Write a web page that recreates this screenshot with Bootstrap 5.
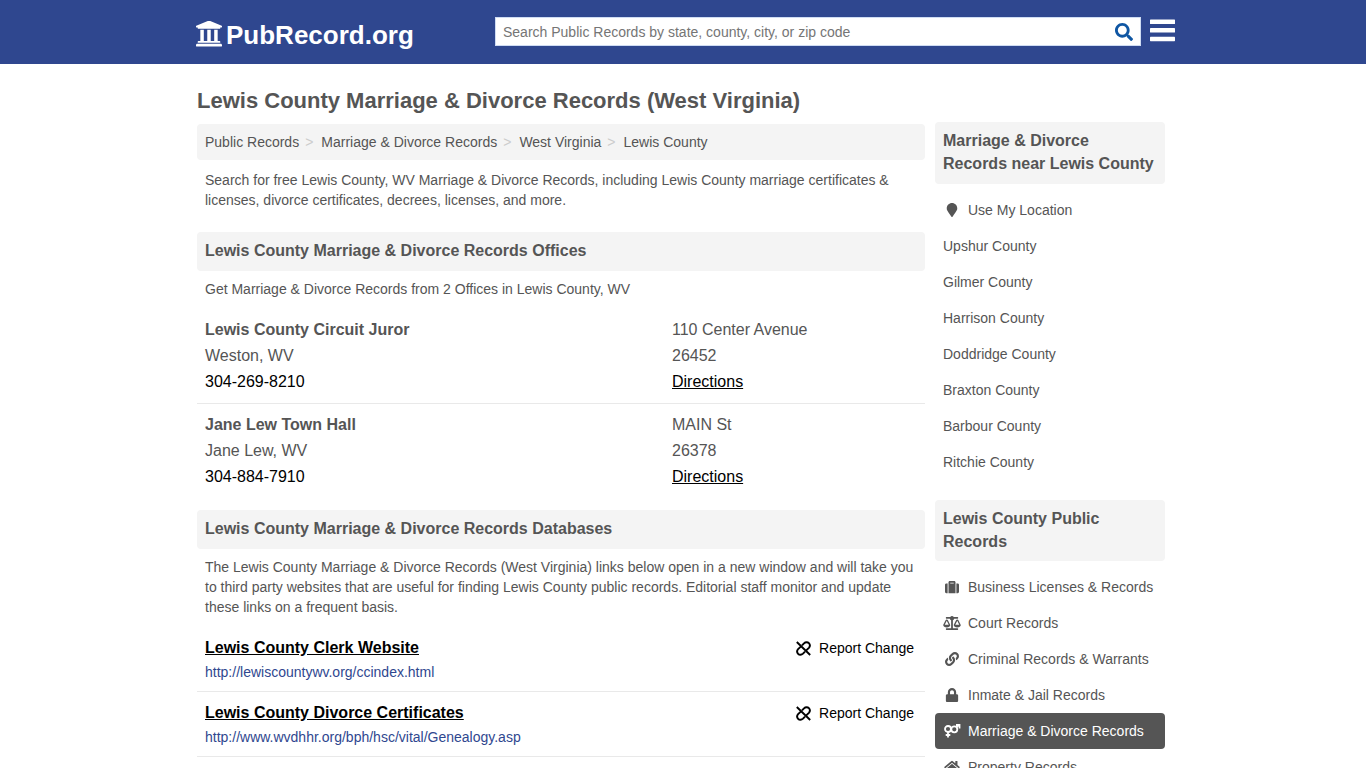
<!DOCTYPE html>
<html lang="en">
<head>
<meta charset="utf-8">
<meta name="viewport" content="width=device-width, initial-scale=1">
<title>Lewis County Marriage &amp; Divorce Records (West Virginia)</title>
<link href="https://cdn.jsdelivr.net/npm/bootstrap@5.3.0/dist/css/bootstrap.min.css" rel="stylesheet">
<style>
body { font-family: "Liberation Sans", Arial, sans-serif; font-size: 14px; line-height: 20px; color: #555; }
.site-header { background: #2f478f; min-height: 64px; }
.header-wrap { max-width: 984px; margin: 0 auto; padding-left: 5px; }
.page-wrap { max-width: 980px; margin: 0 auto; padding: 0 8px 0 4px; gap: 10px; }
.brand { color: #fff; font-size: 26px; line-height: 32px; font-weight: 700; text-decoration: none; padding-top: 3px; gap: 4px; }
.brand svg { margin-top: 2px; }
.search-form { width: 646px; height: 29px; margin-top: 1px; background: #fff; border: 1px solid #cfdcf3; }
.search-form input { font-size: 14px; line-height: 20px; color: #555; padding: 3px 7px; border-radius: 0; }
.search-form input::placeholder { color: #757575; }
.search-form button { padding: 0 7px 0 0; }
.menu-btn { margin-top: 2px; }
.page-title { font-size: 22px; line-height: 32px; font-weight: 700; margin: 0; padding: 21px 0 7px; }
.side-col { width: 230px; flex: none; padding-top: 58px; }
.panel-head { background: #f4f4f4; border-radius: 4px; font-size: 16px; line-height: 23px; font-weight: 700; padding: 7px 8px 9px; }
.side-list + .panel-head { margin-top: 20px; padding-bottom: 8px; }
.crumbs { background: #f4f4f4; border-radius: 4px; padding: 8px; }
.crumbs a { color: #555; text-decoration: none; }
.crumbs li + li::before { content: ">"; color: #ccc; padding: 0 8px 0 6px; }
.intro { margin: 10px 0 22px; }
.lead-in { margin-bottom: 10px; }
.office { font-size: 16px; line-height: 26px; padding: 8px; }
.office + .office { border-top: 1px solid #e9e9e9; margin-bottom: 12px; }
.office .where { width: 245px; flex: none; }
.db-item { border-bottom: 1px solid #e9e9e9; padding: 9px 8px 7px; }
.db-title { font-size: 16px; line-height: 24px; font-weight: 700; }
.db-url { color: #2f478f; line-height: 24px; text-decoration: none; }
.report { border: 0; background: none; color: #000; padding: 2px 3px 0 0; }
.side-list a { color: #555; text-decoration: none; padding: 8px; border-radius: 4px; }
.side-list a.current { background: #555; color: #fff; }
.side-list svg { width: 18px; height: 14px; flex: none; margin-right: 7px; }
</style>
</head>
<body>
<header class="site-header">
  <div class="header-wrap d-flex justify-content-between pt-3">
    <a class="brand d-flex" href="#">
      <svg width="26" height="26" viewBox="16 40 480 450" preserveAspectRatio="none" fill="currentColor" aria-hidden="true"><path d="M496 128v16a8 8 0 0 1-8 8h-24v12c0 6.627-5.373 12-12 12H60c-6.627 0-12-5.373-12-12v-12H24a8 8 0 0 1-8-8v-16a8 8 0 0 1 4.941-7.392l232-88a7.996 7.996 0 0 1 6.118 0l232 88A8 8 0 0 1 496 128zm-24 304H40c-13.255 0-24 10.745-24 24v16a8 8 0 0 0 8 8h464a8 8 0 0 0 8-8v-16c0-13.255-10.745-24-24-24zM96 192v192H60c-6.627 0-12 5.373-12 12v20h416v-20c0-6.627-5.373-12-12-12h-36V192h-64v192h-64V192h-64v192h-64V192H96z"/></svg>
      <span>PubRecord.org</span>
    </a>
    <div class="d-flex align-items-start">
      <form class="search-form d-flex" role="search">
        <input class="form-control border-0 bg-transparent shadow-none" type="text" aria-label="Search Public Records" placeholder="Search Public Records by state, county, city, or zip code">
        <button class="btn border-0 d-flex align-items-center" type="button" aria-label="Search"><svg width="18" height="18" viewBox="0 0 512 512" fill="#0f56a3"><path d="M505 442.7L405.3 343c-4.500-4.500-10.600-7-17-7H372c27.600-35.300 44-79.700 44-128C416 93.100 322.900 0 208 0S0 93.100 0 208s93.100 208 208 208c48.300 0 92.700-16.400 128-44v16.300c0 6.400 2.500 12.500 7 17l99.700 99.700c9.400 9.400 24.600 9.400 33.900 0l28.300-28.300c9.400-9.400 9.400-24.600.1-34zM208 336c-70.700 0-128-57.200-128-128 0-70.700 57.200-128 128-128 70.700 0 128 57.200 128 128 0 70.700-57.200 128-128 128z"/></svg></button>
      </form>
      <button class="btn border-0 p-0 ms-2 menu-btn" type="button" aria-label="Menu"><svg class="d-block" width="26" height="26" viewBox="0 0 26 26" fill="#fff"><rect y="1.500" x="1" width="25" height="4.500" rx=".6"/><rect y="10" x="1" width="25" height="4.500" rx=".6"/><rect y="18.700" x="1" width="25" height="4.500" rx=".6"/></svg></button>
    </div>
  </div>
</header>
<div class="page-wrap d-flex">
  <main class="flex-fill">
    <h1 class="page-title">Lewis County Marriage &amp; Divorce Records (West Virginia)</h1>
    <nav aria-label="Breadcrumb"><ol class="crumbs list-unstyled d-flex mb-0">
      <li><a href="#">Public Records</a></li><li><a href="#">Marriage &amp; Divorce Records</a></li><li><a href="#">West Virginia</a></li><li><a href="#">Lewis County</a></li>
    </ol></nav>
    <p class="px-2 intro">Search for free Lewis County, WV Marriage &amp; Divorce Records, including Lewis County marriage certificates &amp; licenses, divorce certificates, decrees, licenses, and more.</p>
    <h2 class="panel-head mb-2">Lewis County Marriage &amp; Divorce Records Offices</h2>
    <p class="px-2 lead-in">Get Marriage &amp; Divorce Records from 2 Offices in Lewis County, WV</p>
    <div class="office d-flex justify-content-between">
      <div><strong>Lewis County Circuit Juror</strong><br>Weston, WV<br><a class="text-black text-decoration-none" href="tel:304-269-8210">304-269-8210</a></div>
      <div class="where">110 Center Avenue<br>26452<br><a class="text-black" href="#">Directions</a></div>
    </div>
    <div class="office d-flex justify-content-between">
      <div><strong>Jane Lew Town Hall</strong><br>Jane Lew, WV<br><a class="text-black text-decoration-none" href="tel:304-884-7910">304-884-7910</a></div>
      <div class="where">MAIN St<br>26378<br><a class="text-black" href="#">Directions</a></div>
    </div>
    <h2 class="panel-head mb-2">Lewis County Marriage &amp; Divorce Records Databases</h2>
    <p class="px-2 lead-in">The Lewis County Marriage &amp; Divorce Records (West Virginia) links below open in a new window and will take you to third party websites that are useful for finding Lewis County public records. Editorial staff monitor and update these links on a frequent basis.</p>
    <div class="db-item d-flex justify-content-between align-items-start">
      <div><a class="db-title d-block text-black" href="#">Lewis County Clerk Website</a><a class="db-url d-block" href="#">http://lewiscountywv.org/ccindex.html</a></div>
      <button class="report d-flex align-items-center gap-2" type="button"><svg width="15" height="15" viewBox="0 0 15 15" fill="none" stroke="#000" stroke-width="1.900" aria-hidden="true"><path d="M.8 1l13.400 13M6 4.400l2-2.100c1.600-1.600 3.800-1.300 4.900-.1s1.200 3.200 0 4.600l-2.400 2.400M9 10.600l-2 2.100c-1.600 1.600-3.800 1.300-4.900.1s-1.200-3.200 0-4.600l2.400-2.400"/></svg>Report Change</button>
    </div>
    <div class="db-item d-flex justify-content-between align-items-start">
      <div><a class="db-title d-block text-black" href="#">Lewis County Divorce Certificates</a><a class="db-url d-block" href="#">http://www.wvdhhr.org/bph/hsc/vital/Genealogy.asp</a></div>
      <button class="report d-flex align-items-center gap-2" type="button"><svg width="15" height="15" viewBox="0 0 15 15" fill="none" stroke="#000" stroke-width="1.900" aria-hidden="true"><path d="M.8 1l13.400 13M6 4.400l2-2.100c1.600-1.600 3.800-1.300 4.900-.1s1.200 3.200 0 4.600l-2.400 2.400M9 10.600l-2 2.100c-1.600 1.600-3.800 1.300-4.900.1s-1.200-3.200 0-4.600l2.400-2.400"/></svg>Report Change</button>
    </div>
  </main>
  <aside class="side-col">
    <h2 class="panel-head mb-2">Marriage &amp; Divorce Records near Lewis County</h2>
    <nav class="side-list" aria-label="Nearby counties">
      <a class="d-flex align-items-center" href="#"><svg viewBox="0 0 384 512" fill="currentColor"><path d="M172.268 501.67C26.97 291.031 0 269.413 0 192 0 85.961 85.961 0 192 0s192 85.961 192 192c0 77.413-26.97 99.031-172.268 309.67-9.535 13.774-29.930 13.773-39.464 0z"/></svg>Use My Location</a>
      <a class="d-block" href="#">Upshur County</a>
      <a class="d-block" href="#">Gilmer County</a>
      <a class="d-block" href="#">Harrison County</a>
      <a class="d-block" href="#">Doddridge County</a>
      <a class="d-block" href="#">Braxton County</a>
      <a class="d-block" href="#">Barbour County</a>
      <a class="d-block" href="#">Ritchie County</a>
    </nav>
    <h2 class="panel-head mb-2">Lewis County Public Records</h2>
    <nav class="side-list" aria-label="Record types">
      <a class="d-flex align-items-center" href="#"><svg viewBox="0 0 512 512" fill="currentColor"><path d="M128 480h256V80c0-26.500-21.500-48-48-48H176c-26.500 0-48 21.500-48 48v400zm64-384h128v32H192V96zm320 80v256c0 26.500-21.500 48-48 48h-48V128h48c26.500 0 48 21.500 48 48zM96 480H48c-26.500 0-48-21.500-48-48V176c0-26.500 21.500-48 48-48h48v352z"/></svg>Business Licenses &amp; Records</a>
      <a class="d-flex align-items-center" href="#"><svg viewBox="0 0 640 512" fill="currentColor"><path d="M256 336h-.02c0-16.180 1.340-8.730-85.050-181.510-17.650-35.290-68.190-35.360-85.870 0C-2.060 328.750.02 320.330.02 336H0c0 44.180 57.310 80 128 80s128-35.820 128-80zM128 176l72 144H56l72-144zm511.980 160c0-16.180 1.340-8.730-85.050-181.510-17.650-35.290-68.190-35.360-85.870 0-87.120 174.260-85.040 165.840-85.040 181.510H384c0 44.180 57.310 80 128 80s128-35.820 128-80h-.02zM440 320l72-144 72 144H440zm88 128H352V153.250c23.510-10.290 41.160-31.480 46.390-57.250H528c8.840 0 16-7.160 16-16V48c0-8.840-7.160-16-16-16H383.640C369.040 12.680 346.090 0 320 0s-49.040 12.680-63.640 32H112c-8.840 0-16 7.160-16 16v32c0 8.840 7.160 16 16 16h129.610c5.230 25.760 22.870 46.960 46.390 57.250V448H112c-8.840 0-16 7.160-16 16v32c0 8.840 7.160 16 16 16h416c8.840 0 16-7.160 16-16v-32c0-8.840-7.160-16-16-16z"/></svg>Court Records</a>
      <a class="d-flex align-items-center" href="#"><svg viewBox="0 0 512 512" fill="currentColor"><path d="M326.612 185.391c59.747 59.809 58.927 155.698.36 214.590-.11.12-.24.25-.36.37l-67.200 67.200c-59.270 59.270-155.699 59.262-214.960 0-59.270-59.260-59.270-155.700 0-214.960l37.106-37.106c9.840-9.840 26.786-3.300 27.294 10.606.648 17.722 3.826 35.527 9.690 52.721 1.986 5.822.567 12.262-3.783 16.612l-13.087 13.087c-28.026 28.026-28.905 73.660-1.155 101.960 28.024 28.579 74.086 28.749 102.325.51l67.200-67.190c28.191-28.191 28.073-73.757 0-101.830-3.701-3.694-7.429-6.564-10.341-8.569a16.037 16.037 0 0 1-6.947-12.606c-.396-10.567 3.348-21.456 11.698-29.806l21.054-21.055c5.521-5.521 14.182-6.199 20.584-1.731a152.482 152.482 0 0 1 20.522 17.197zM467.547 44.449c-59.261-59.262-155.690-59.270-214.960 0l-67.200 67.200c-.12.12-.25.25-.36.37-58.566 58.892-59.387 154.781.36 214.590a152.454 152.454 0 0 0 20.521 17.196c6.402 4.468 15.064 3.789 20.584-1.731l21.054-21.055c8.350-8.350 12.094-19.239 11.698-29.806a16.037 16.037 0 0 0-6.947-12.606c-2.912-2.005-6.640-4.875-10.341-8.569-28.073-28.073-28.191-73.639 0-101.830l67.200-67.190c28.239-28.239 74.300-28.069 102.325.51 27.750 28.300 26.872 73.934-1.155 101.960l-13.087 13.087c-4.350 4.350-5.769 10.790-3.783 16.612 5.864 17.194 9.042 34.999 9.690 52.721.509 13.906 17.454 20.446 27.294 10.606l37.106-37.106c59.271-59.259 59.271-155.699.001-214.959z"/></svg>Criminal Records &amp; Warrants</a>
      <a class="d-flex align-items-center" href="#"><svg viewBox="0 0 448 512" fill="currentColor"><path d="M400 224h-24v-72C376 68.200 307.800 0 224 0S72 68.200 72 152v72H48c-26.500 0-48 21.500-48 48v192c0 26.500 21.500 48 48 48h352c26.500 0 48-21.500 48-48V272c0-26.500-21.500-48-48-48zm-104 0H152v-72c0-39.700 32.300-72 72-72s72 32.300 72 72v72z"/></svg>Inmate &amp; Jail Records</a>
      <a class="d-flex align-items-center current" href="#" aria-current="page"><svg viewBox="0 0 18 14" fill="none" stroke="currentColor" stroke-width="1.800"><circle cx="5" cy="5" r="3"/><path d="M5 8v5.500M2.700 11h4.600M13.300 3.300L16 .9M13 1h3.500v3.400"/><circle cx="11.300" cy="5.300" r="3"/></svg>Marriage &amp; Divorce Records</a>
      <a class="d-flex align-items-center" href="#"><svg viewBox="0 0 576 512" fill="currentColor"><path d="M280.370 148.260L96 300.110V464a16 16 0 0 0 16 16l112.060-.29a16 16 0 0 0 15.920-16V368a16 16 0 0 1 16-16h64a16 16 0 0 1 16 16v95.640a16 16 0 0 0 16 16.050L464 480a16 16 0 0 0 16-16V300L295.670 148.260a12.190 12.190 0 0 0-15.300 0zM571.600 251.470L488 182.560V44.050a12 12 0 0 0-12-12h-56a12 12 0 0 0-12 12v72.610L318.470 43a48 48 0 0 0-61 0L4.340 251.470a12 12 0 0 0-1.600 16.900l25.500 31A12 12 0 0 0 45.150 301l235.220-193.740a12.190 12.190 0 0 1 15.300 0L530.900 301a12 12 0 0 0 16.900-1.600l25.500-31a12 12 0 0 0-1.700-16.930z"/></svg>Property Records</a>
    </nav>
  </aside>
</div>
<script src="https://cdn.jsdelivr.net/npm/bootstrap@5.3.0/dist/js/bootstrap.bundle.min.js"></script>
</body>
</html>
